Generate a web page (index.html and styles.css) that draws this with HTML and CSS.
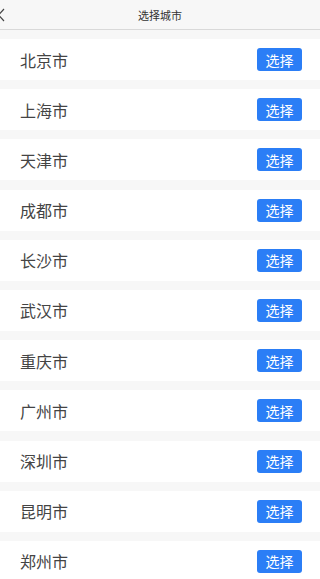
FILE: index.html
```html
<!DOCTYPE html>
<html lang="zh-CN">
  <head>
    <meta charset="UTF-8">
    <meta name="viewport" content="width=device-width, initial-scale=1.0">
    <title>选择城市</title>
    <link rel="stylesheet" href="styles.css">
  </head>
  <body>
    <div class="header">
      <span class="back">
        <svg width="8" height="14" viewBox="0 0 8 14"><path d="M6 1 L0.5 7 L6 13" fill="none" stroke="#444" stroke-width="1.2"/></svg>
      </span>
      <h1>选择城市</h1>
    </div>
    <ul class="city-list">
      <li class="city"><span class="name">北京市</span><button class="btn-select">选择</button></li>
      <li class="city"><span class="name">上海市</span><button class="btn-select">选择</button></li>
      <li class="city"><span class="name">天津市</span><button class="btn-select">选择</button></li>
      <li class="city"><span class="name">成都市</span><button class="btn-select">选择</button></li>
      <li class="city"><span class="name">长沙市</span><button class="btn-select">选择</button></li>
      <li class="city"><span class="name">武汉市</span><button class="btn-select">选择</button></li>
      <li class="city"><span class="name">重庆市</span><button class="btn-select">选择</button></li>
      <li class="city"><span class="name">广州市</span><button class="btn-select">选择</button></li>
      <li class="city"><span class="name">深圳市</span><button class="btn-select">选择</button></li>
      <li class="city"><span class="name">昆明市</span><button class="btn-select">选择</button></li>
      <li class="city"><span class="name">郑州市</span><button class="btn-select">选择</button></li>
    </ul>
  </body>
</html>
```

FILE: styles.css
```css
*{
    margin:0;
    padding:0;
    box-sizing:border-box;
}

body{
    background-color:#f7f7f7;
    color:#333;
    font-family:"Noto Sans CJK SC", "Noto Sans", sans-serif;
}

.header{
    height:30px;
    border-bottom:1px solid #d9d9d9;
    display:flex;
    align-items:center;
    justify-content:center;
    position:relative;
}

.back{
    position:absolute;
    left:-2px;
    top:8px;
    display:flex;
}

h1{
    font-size:11px;
    font-weight:normal;
    color:#333;
}

.city-list{
    list-style:none;
    padding-top:9px;
}

.city{
    height:41px;
    margin-bottom:9.2px;
    background-color:#fff;
    display:flex;
    align-items:center;
    justify-content:space-between;
    padding:0 18px 0 20px;
}

.name{
    font-size:16px;
    color:#444;
}

.btn-select{
    width:45px;
    height:23px;
    border:none;
    border-radius:3px;
    background-color:#2b7ef6;
    color:#fff;
    font-family:"Noto Sans CJK SC", sans-serif;
    font-size:14px;
    cursor:pointer;
}
```
